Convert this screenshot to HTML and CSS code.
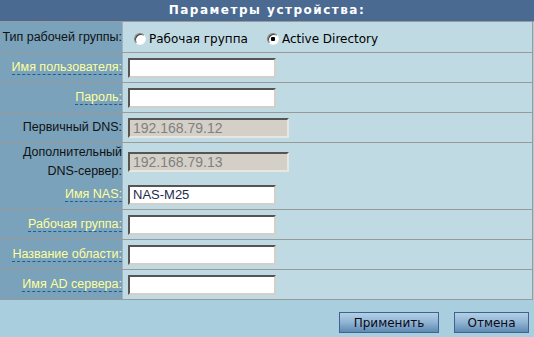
FILE: index.html
```html
<!DOCTYPE html>
<html lang="ru">
<head>
  <meta charset="UTF-8">
  <title>Параметры устройства</title>
  <link rel="stylesheet" href="styles.css">
</head>
<body>
  <div class="panel">
    <div class="title">Параметры устройства:</div>

    <div class="row row-first">
      <div class="label">Тип рабочей группы:</div>
      <div class="value">
        <label class="radio"><input type="radio" name="wgtype"> Рабочая группа</label>
        <label class="radio"><input type="radio" name="wgtype" checked> Active Directory</label>
      </div>
    </div>

    <div class="row">
      <div class="label"><span class="hint">Имя пользователя:</span></div>
      <div class="value"><input type="text" class="field"></div>
    </div>

    <div class="row">
      <div class="label"><span class="hint">Пароль:</span></div>
      <div class="value"><input type="password" class="field"></div>
    </div>

    <div class="row">
      <div class="label">Первичный DNS:</div>
      <div class="value"><input type="text" class="field wide" value="192.168.79.12" disabled></div>
    </div>

    <div class="row row-tall">
      <div class="label">Дополнительный<br>DNS-сервер:</div>
      <div class="value"><input type="text" class="field wide" value="192.168.79.13" disabled></div>
    </div>

    <div class="row">
      <div class="label"><span class="hint">Имя NAS:</span></div>
      <div class="value"><input type="text" class="field" value="NAS-M25"></div>
    </div>

    <div class="row">
      <div class="label"><span class="hint">Рабочая группа:</span></div>
      <div class="value"><input type="text" class="field"></div>
    </div>

    <div class="row">
      <div class="label"><span class="hint">Название области:</span></div>
      <div class="value"><input type="text" class="field"></div>
    </div>

    <div class="row">
      <div class="label"><span class="hint">Имя AD сервера:</span></div>
      <div class="value"><input type="text" class="field"></div>
    </div>

    <div class="actions">
      <button class="btn btn-apply">Применить</button>
      <button class="btn btn-cancel">Отмена</button>
    </div>
  </div>
</body>
</html>
```

FILE: styles.css
```css
body {
  margin: 0;
  background: #a9cfde;
  font-family: "Liberation Sans", Arial, sans-serif;
  font-size: 12.5px;
}
.panel {
  width: 534px;
}
.title {
  box-sizing: border-box;
  height: 22px;
  background: #4b6a92;
  border-bottom: 1px solid #9a9a9a;
  color: #fff;
  font-family: "DejaVu Sans", Verdana, sans-serif;
  font-weight: bold;
  font-size: 12px;
  letter-spacing: 1.5px;
  text-align: center;
  line-height: 21px;
}
.row {
  box-sizing: border-box;
  width: 533px;
  height: 30px;
  display: grid;
  grid-template-columns: 123px 1fr;
  border-bottom: 1px solid #9a9a9a;
  border-right: 1px solid #9a9a9a;
}
.row-first {
  height: 31px;
}
.row-tall {
  height: 37px;
}
.label {
  background: #7aa2bb;
  border-right: 1px solid #9fb4c0;
  display: flex;
  align-items: center;
  justify-content: flex-end;
  text-align: right;
  color: #111;
  line-height: 19px;
}
.hint {
  color: #ffff9c;
  border-bottom: 1px dashed #1e5e8e;
  line-height: 14px;
}
.value {
  background: #c0dae3;
  display: flex;
  align-items: center;
  padding-left: 5px;
}
.radio {
  display: flex;
  align-items: center;
  font-family: "DejaVu Sans", Verdana, sans-serif;
  font-size: 12px;
  color: #000;
  margin-right: 13px;
  padding-top: 3px;
}
.radio input {
  appearance: none;
  box-sizing: border-box;
  width: 12px;
  height: 12px;
  margin: 0 3px 0 6px;
  border-radius: 50%;
  border: 1px solid;
  border-color: #808080 #f4f4f4 #f4f4f4 #808080;
  background: #fff;
  box-shadow: inset 1px 1px 0 #404040;
}
.radio input:checked {
  background: radial-gradient(circle, #000 0, #000 2px, #fff 2.5px);
}
.field {
  box-sizing: border-box;
  width: 148px;
  height: 20px;
  margin: 0;
  padding: 0 3px;
  border: 2px solid;
  border-color: #555 #d4d0c8 #d4d0c8 #555;
  background: #fff;
  font-family: "Liberation Sans", Arial, sans-serif;
  font-size: 13px;
  color: #1c2c4c;
}
.field.wide {
  width: 161px;
  background: #d4d0c8;
  border-color: #555 #e8e6e0 #e8e6e0 #555;
  color: #808080;
  font-size: 14px;
}
.actions {
  display: flex;
  justify-content: flex-end;
  gap: 15px;
  padding: 12px 5px 0 0;
}
.btn {
  height: 21px;
  padding: 0;
  border: 1px solid #3f6290;
  background: linear-gradient(#b4d0e6, #8fb3d2 50%, #5e8ab2);
  font-family: "DejaVu Sans", Verdana, sans-serif;
  font-size: 12px;
  color: #0a0a1a;
  cursor: pointer;
}
.btn-apply {
  width: 100px;
}
.btn-cancel {
  width: 75px;
}
```
